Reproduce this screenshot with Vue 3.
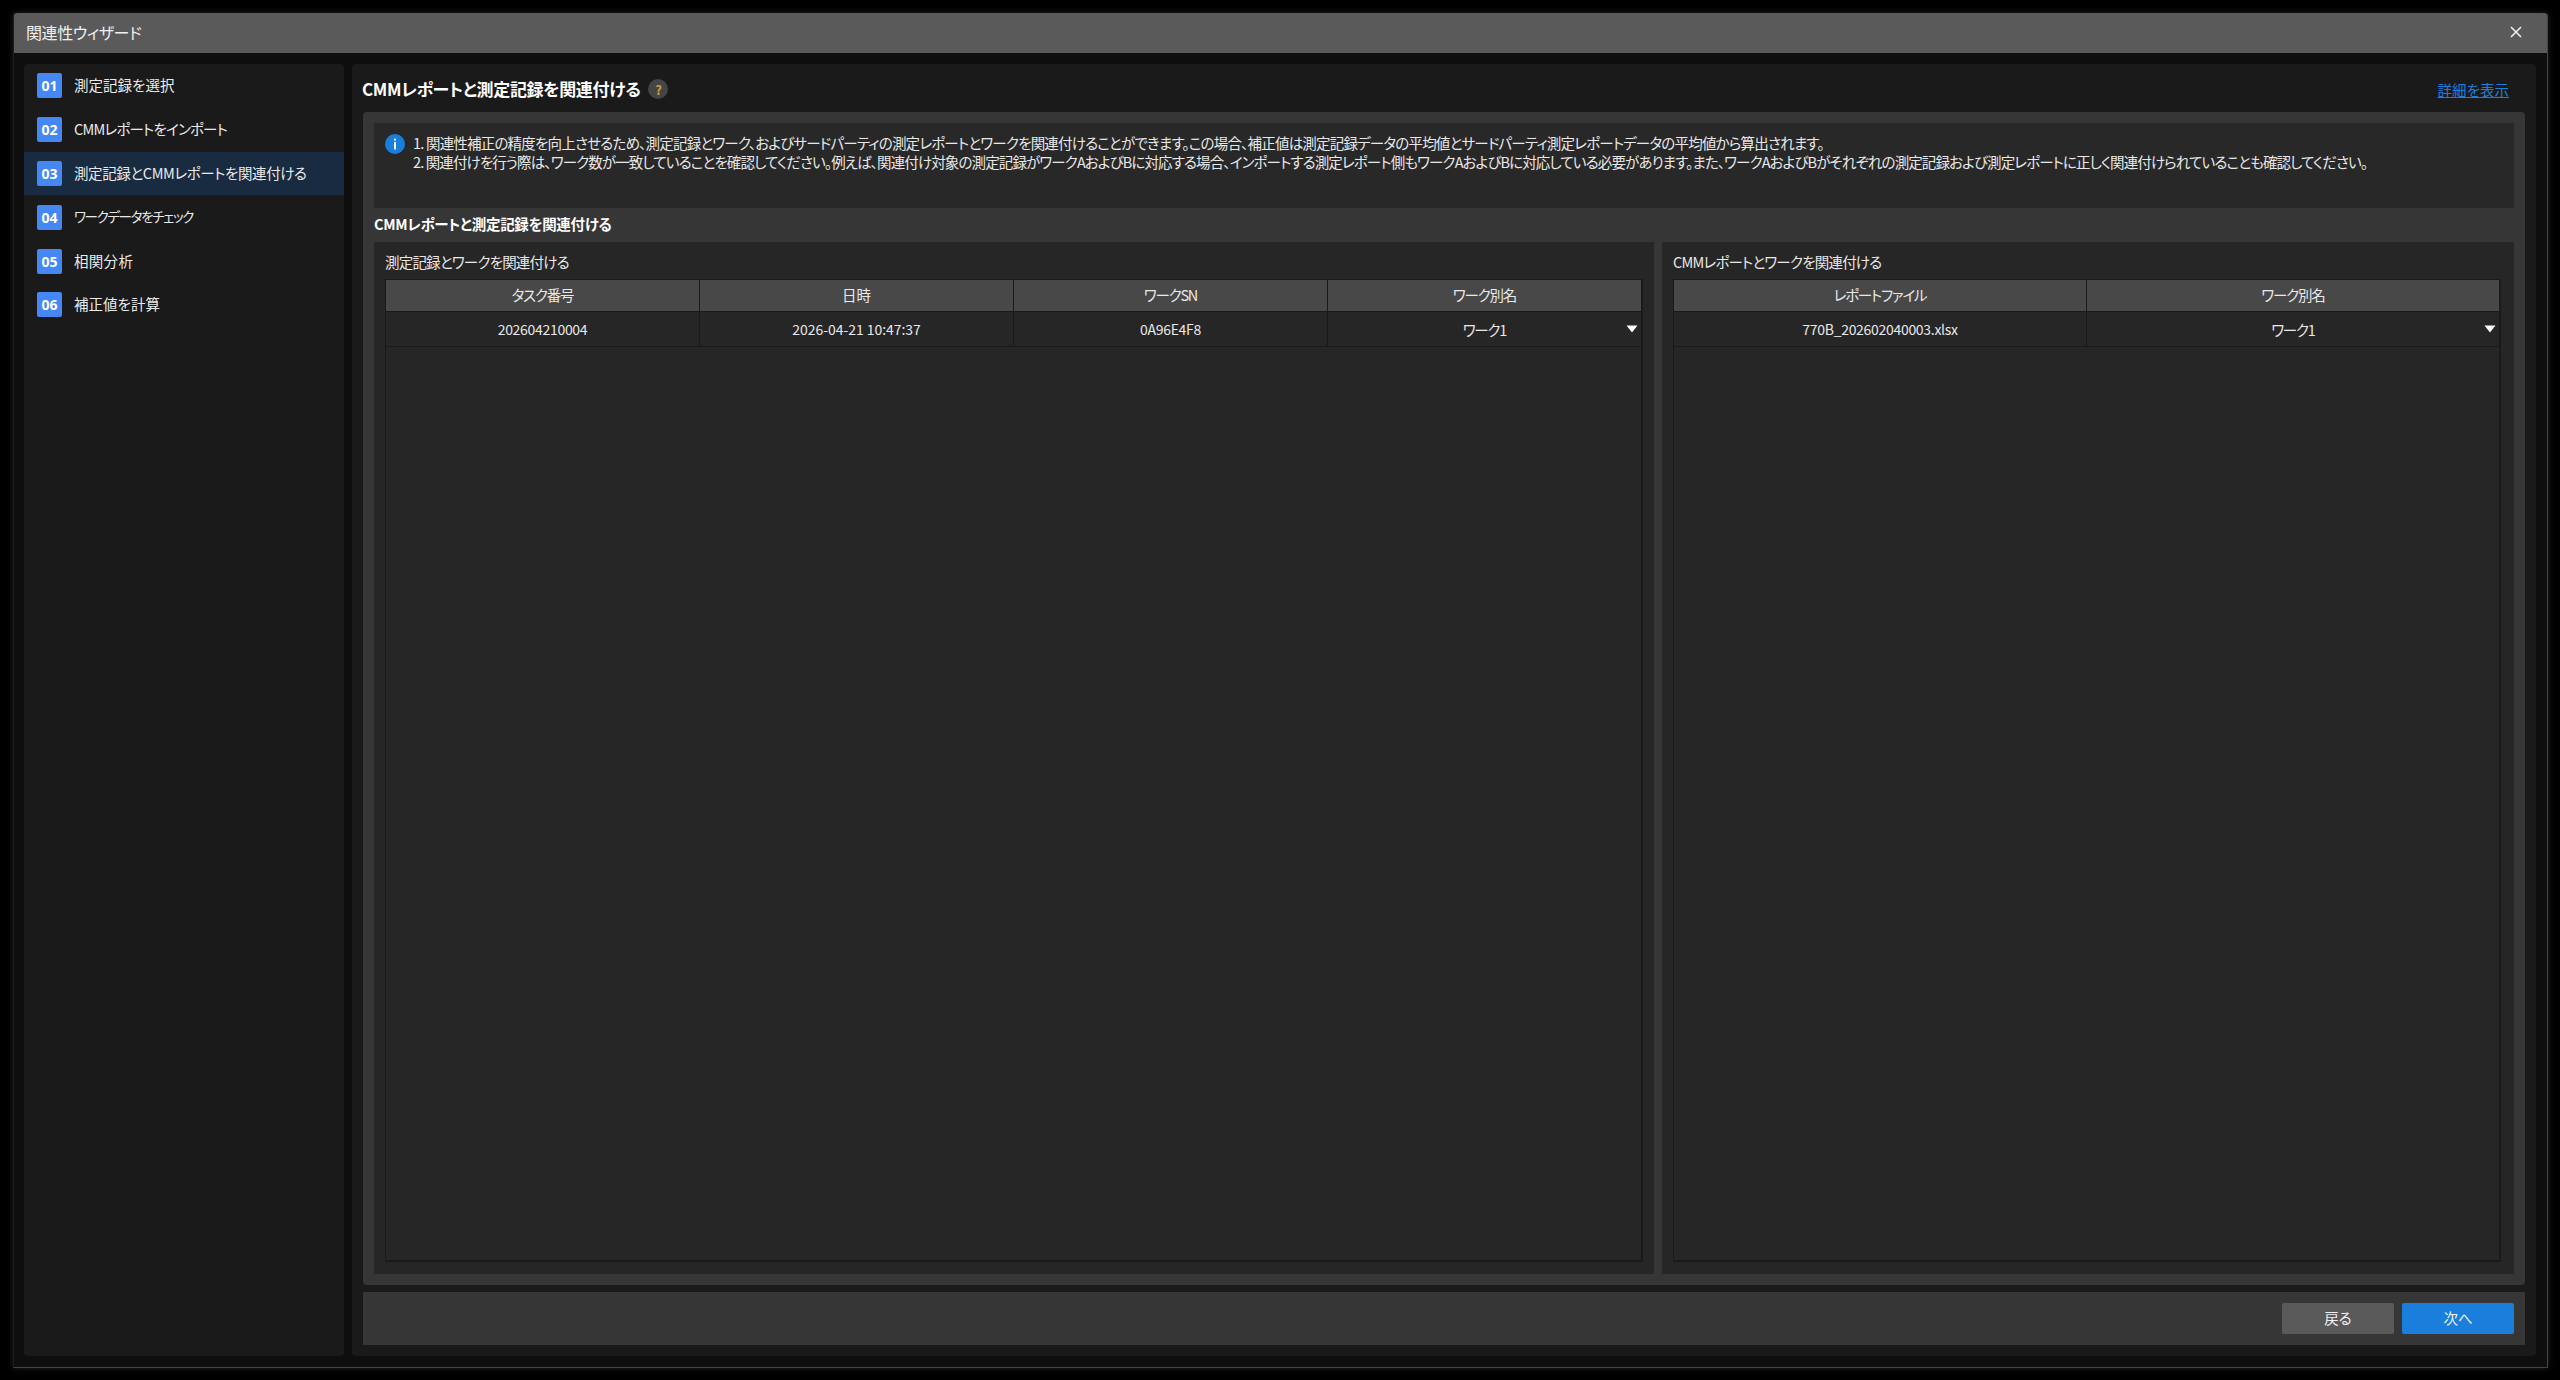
<script setup>
const steps = [
  { no: '01', label: '測定記録を選択', fit: 'fit-none' },
  { no: '02', label: 'CMMレポートをインポート', fit: 'fit-b' },
  { no: '03', label: '測定記録とCMMレポートを関連付ける', fit: 'fit-a' },
  { no: '04', label: 'ワークデータをチェック', fit: 'fit-d' },
  { no: '05', label: '相関分析', fit: 'fit-w' },
  { no: '06', label: '補正値を計算', fit: 'fit-none' }
]
const tables = [
  {
    key: 'records',
    title: '測定記録とワークを関連付ける',
    head: [
      { text: 'タスク番号', fit: 'fit-c' },
      { text: '日時', fit: 'fit-none' },
      { text: 'ワークSN', fit: 'fit-c' },
      { text: 'ワーク別名', fit: 'fit-c' }
    ],
    row: [
      { text: '202604210004', fit: 'fit-s' },
      { text: '2026-04-21 10:47:37', fit: 'fit-n' },
      { text: '0A96E4F8', fit: 'fit-s' },
      { text: 'ワーク1', fit: 'fit-c' }
    ]
  },
  {
    key: 'report',
    title: 'CMMレポートとワークを関連付ける',
    head: [
      { text: 'レポートファイル', fit: 'fit-c' },
      { text: 'ワーク別名', fit: 'fit-c' }
    ],
    row: [
      { text: '770B_202602040003.xlsx', fit: 'fit-s' },
      { text: 'ワーク1', fit: 'fit-c' }
    ]
  }
]
</script>

<template>
  <div class="page">
    <div class="window">
      <header class="titlebar">
        <span class="title-text">関連性ウィザード</span>
        <svg class="close" width="12" height="12" viewBox="0 0 12 12">
          <path d="M1 1 L11 11 M11 1 L1 11" stroke="#f2f2f2" stroke-width="1.5" fill="none" />
        </svg>
      </header>
      <div class="body">
        <aside class="sidebar">
          <div v-for="(s, i) in steps" :key="s.no" class="step" :class="{ active: i === 2 }">
            <span class="badge">{{ s.no }}</span>
            <span class="step-label" :class="s.fit">{{ s.label }}</span>
          </div>
        </aside>
        <main class="main">
          <div class="main-head">
            <h1 class="main-title">CMMレポートと測定記録を関連付ける</h1>
            <span class="help">?</span>
            <a class="link">詳細を表示</a>
          </div>
          <section class="panel">
            <div class="info">
              <svg class="info-icon" width="20" height="20" viewBox="0 0 20 20">
                <circle cx="10" cy="10" r="10" fill="#1a7fdc" />
                <rect x="9" y="8.2" width="2" height="7.2" fill="#fff" />
                <rect x="9" y="4.6" width="2" height="2" fill="#fff" />
              </svg>
              <div class="info-text">
                <div>1. 関連性補正の精度を向上させるため、測定記録とワーク、およびサードパーティの測定レポートとワークを関連付けることができます。この場合、補正値は測定記録データの平均値とサードパーティ測定レポートデータの平均値から算出されます。</div>
                <div class="info-line-2">2. 関連付けを行う際は、ワーク数が一致していることを確認してください。例えば、関連付け対象の測定記録がワークAおよびBに対応する場合、インポートする測定レポート側もワークAおよびBに対応している必要があります。また、ワークAおよびBがそれぞれの測定記録および測定レポートに正しく関連付けられていることも確認してください。</div>
              </div>
            </div>
            <h2 class="section-title">CMMレポートと測定記録を関連付ける</h2>
            <div class="tables">
              <div v-for="t in tables" :key="t.key" class="table-panel" :class="t.key">
                <div class="table-label">{{ t.title }}</div>
                <div class="table">
                  <div class="tr thead">
                    <div v-for="h in t.head" :key="h.text" class="th">
                      <span :class="h.fit">{{ h.text }}</span>
                    </div>
                  </div>
                  <div class="tr tbody">
                    <div v-for="(c, i) in t.row" :key="i" class="td" :class="{ select: i === t.row.length - 1 }">
                      <span :class="c.fit">{{ c.text }}</span>
                      <svg v-if="i === t.row.length - 1" class="arrow" width="12" height="8" viewBox="0 0 12 8">
                        <path d="M0.5 0.5 H11.5 L6 7.5 Z" fill="#fff" />
                      </svg>
                    </div>
                  </div>
                </div>
              </div>
            </div>
          </section>
          <footer class="footer">
            <button class="btn back">戻る</button>
            <button class="btn next">次へ</button>
          </footer>
        </main>
      </div>
    </div>
  </div>
</template>

<style>
html, body { margin: 0; background: #000; }
</style>

<style scoped>
* { box-sizing: border-box; }
.page {
  width: 2560px;
  height: 1380px;
  padding: 13px 12px 12px 13px;
  background: #000;
  font-family: "Noto Sans CJK JP", "Noto Sans", sans-serif;
  font-feature-settings: "palt";
  font-size: 14.5px;
  color: #e8e8e8;
  overflow: hidden;
}
.fit-none { letter-spacing: 0; }
.fit-w { letter-spacing: 0.3px; }
.fit-a { letter-spacing: -0.4px; }
.fit-b { letter-spacing: -0.8px; }
.fit-c { letter-spacing: -1.2px; }
.fit-d { font-size: 13.5px; letter-spacing: -1.35px; }
.fit-s { font-size: 14px; letter-spacing: -0.3px; }
.fit-n { font-size: 14px; letter-spacing: -0.05px; }
.window {
  height: 100%;
  display: flex;
  flex-direction: column;
  background: #0e0e0e;
  border: 1px solid #1c1c1c;
  border-top: 0;
  border-bottom-color: #444;
  border-right-color: #444;
  border-radius: 3px 3px 0 0;
  box-shadow: 0 0 6px rgba(70, 70, 70, 0.5);
}
.titlebar {
  height: 40px;
  flex: none;
  display: flex;
  align-items: center;
  justify-content: space-between;
  padding: 0 25px 2px 12px;
  background: #5a5a5a;
  border-radius: 3px 3px 0 0;
}
.title-text { font-size: 16px; letter-spacing: -0.4px; color: #f0f0f0; }
.body {
  flex: 1;
  min-height: 0;
  display: flex;
  gap: 8px;
  padding: 11px 11px 11px 10px;
}
.sidebar {
  width: 320px;
  flex: none;
  background: #1a1a1a;
  border-radius: 4px;
}
.step {
  height: 43.8px;
  display: flex;
  align-items: center;
  gap: 12px;
  padding-left: 13px;
}
.step.active { background: #192b40; }
.badge {
  width: 25px;
  height: 25px;
  display: flex;
  align-items: center;
  justify-content: center;
  background: #4487f5;
  border-radius: 2px;
  color: #fff;
  font-family: "Open Sans", sans-serif;
  font-weight: 700;
  font-size: 14px;
}
.step-label { font-size: 14.5px; color: #eaeaea; padding-bottom: 2px; }
.step-label.fit-d { font-size: 13.5px; }
.main {
  flex: 1;
  min-width: 0;
  display: flex;
  flex-direction: column;
  padding: 0 11px 11px;
  background: #1a1a1a;
  border-radius: 4px;
}
.main-head {
  height: 48px;
  flex: none;
  display: flex;
  align-items: center;
  gap: 8px;
  padding-top: 2px;
}
.main-title {
  margin: 0 0 2px -1px;
  font-size: 17px;
  letter-spacing: -0.35px;
  font-weight: 700;
  color: #fff;
}
.help {
  width: 20px;
  height: 20px;
  display: flex;
  align-items: center;
  justify-content: center;
  border-radius: 50%;
  background: #454545;
  color: #c99f3e;
  font-size: 13px;
  font-weight: 700;
}
.link {
  margin-left: auto;
  margin-right: 16px;
  color: #1a7fdc;
  text-decoration: underline;
  font-size: 14.5px;
}
.panel {
  flex: 1;
  min-height: 0;
  display: flex;
  flex-direction: column;
  padding: 11px;
  background: #363636;
  border-radius: 4px;
}
.info {
  height: 85px;
  flex: none;
  display: flex;
  gap: 8px;
  padding: 11px 11px 0;
  background: #282828;
}
.info-icon { flex: none; }
.info-text {
  margin-top: -1px;
  font-size: 14.5px;
  letter-spacing: -0.8px;
  line-height: 19px;
  white-space: nowrap;
  color: #e8e8e8;
}
.info-line-2 { letter-spacing: -0.88px; }
.section-title {
  height: 34px;
  flex: none;
  margin: 0;
  padding-bottom: 4px;
  display: flex;
  align-items: center;
  font-size: 14.5px;
  letter-spacing: -0.3px;
  font-weight: 700;
  color: #fff;
}
.tables {
  flex: 1;
  min-height: 0;
  display: flex;
  gap: 8px;
}
.table-panel {
  min-width: 0;
  display: flex;
  flex-direction: column;
  padding: 0 11px 12px;
  background: #262626;
}
.table-panel.records { width: 1280px; flex: none; }
.table-panel.report { flex: 1; padding-right: 13px; }
.table-label {
  height: 37px;
  flex: none;
  display: flex;
  align-items: center;
  padding-top: 1px;
  letter-spacing: -0.8px;
  color: #e8e8e8;
}
.table {
  flex: 1;
  min-height: 0;
  border: 1px solid #1a1a1a;
  border-width: 1px 2px 2px 1px;
}
.tr { display: flex; }
.thead { height: 32px; background: #484848; border-bottom: 1px solid #1a1a1a; }
.tbody { height: 35px; border-bottom: 1px solid #1a1a1a; }
.th, .td {
  flex: 1 1 0;
  min-width: 0;
  display: flex;
  align-items: center;
  justify-content: center;
  font-size: 14.5px;
  color: #e8e8e8;
}
.th { padding-bottom: 2px; }
.th + .th, .td + .td { border-left: 1px solid #1a1a1a; }
.td.select { position: relative; }
.arrow { position: absolute; right: 3px; top: 13px; }
.footer {
  height: 53px;
  flex: none;
  margin-top: 7px;
  display: flex;
  align-items: center;
  justify-content: flex-end;
  gap: 8px;
  padding-right: 11px;
  background: #363636;
}
.btn {
  width: 112px;
  height: 31px;
  border: 0;
  border-radius: 2px;
  padding: 0 0 2px;
  font-family: inherit;
  font-feature-settings: inherit;
  font-size: 14.5px;
  color: #f0f0f0;
}
.back { background: #5a5a5a; }
.next { background: #1a7fdc; }
</style>
